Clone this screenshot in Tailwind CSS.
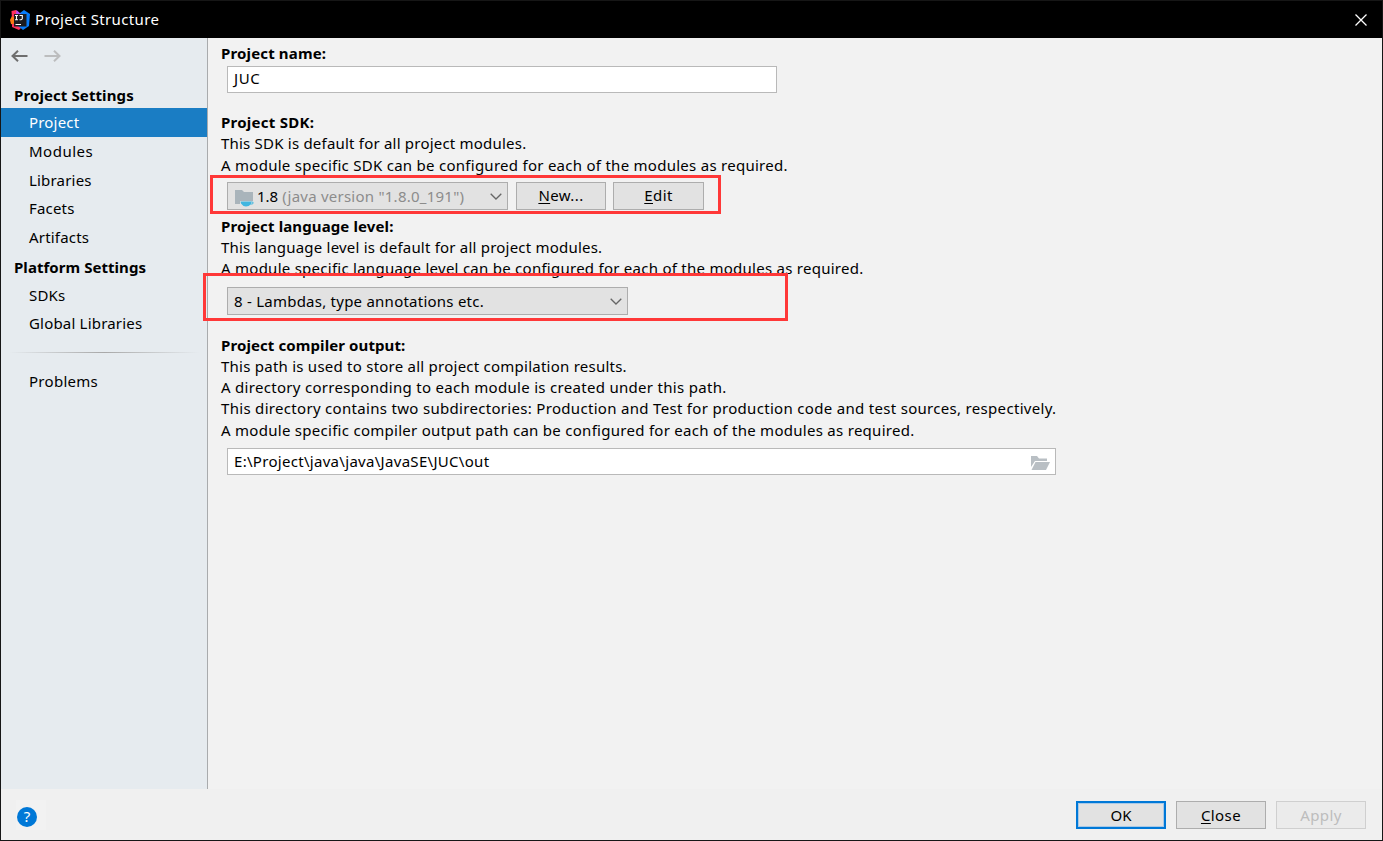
<!DOCTYPE html>
<html lang="en">
<head>
<meta charset="utf-8">
<title>Project Structure</title>
<script src="https://cdn.jsdelivr.net/npm/@tailwindcss/browser@4"></script>
</head>
<body class="relative w-[1383px] h-[841px] overflow-hidden bg-[#f2f2f2] font-['Noto_Sans','Open_Sans',sans-serif] text-[15px] leading-[21px] text-black whitespace-nowrap">
<div class="flex h-full flex-col border border-[#161616]">
  <header class="flex h-[37px] shrink-0 items-center bg-black pl-[9px] pr-[15px] text-white">
    <svg class="size-5 shrink-0" viewBox="0 0 20 20">
      <path d="M1.500 1L6 0l4 4-5 6-3-1z" fill="#fe315d"/>
      <path d="M0 10l2-4 4 3-1 6-4-1z" fill="#f97a12"/>
      <path d="M2 14l6-1 4 4-3 3-7-3z" fill="#fe315d"/>
      <path d="M10 3l4-3 6 4-1 12-6 4-5-4z" fill="#087cfa"/>
      <path d="M6.500 0L11 4H6z" fill="#b74af7"/>
      <rect x="4" y="4" width="12.500" height="12.500" fill="#1b1b1f"/>
      <path d="M5 5.500h3M6.500 5.500v4.500M5 9.700h3M9.500 5.500h2.800v3q0 1.300-2.800 1.200M5.500 14.500h5.500" stroke="#fff" stroke-width="1.100" fill="none"/>
    </svg>
    <h1 class="ml-[5px] grow tracking-[0.35px]">Project Structure</h1>
    <svg class="size-[12px]" viewBox="0 0 12 12"><path d="M.5.5l11 11M11.500.5l-11 11" stroke="#fff" stroke-width="1.300"/></svg>
  </header>

  <div class="flex h-[751px] shrink-0">
    <nav class="flex w-[207px] shrink-0 flex-col border-r border-[#a9abad] bg-[#e6ebef] tracking-[0.19px]">
      <div class="flex h-[47px] gap-4 pl-[10px] pt-[12px]">
        <svg class="h-[13px] w-[17px]" viewBox="0 0 17 13"><path d="M16.500 6H1.500M7 .7L1.500 6L7 11.300" fill="none" stroke="#6e6e6e" stroke-width="2"/></svg>
        <svg class="h-[13px] w-[17px]" viewBox="0 0 17 13"><path d="M.5 6h15M10 .7l5.500 5.300L10 11.300" fill="none" stroke="#bcbdbe" stroke-width="2"/></svg>
      </div>
      <h2 class="h-[23px] pl-[13px] font-bold tracking-[0.1px]">Project Settings</h2>
      <ul class="leading-[29px]">
        <li class="h-[29px] bg-[#1a7dc4] pl-7 text-white">Project</li>
        <li class="h-[29px] pl-7 tracking-[0.5px]">Modules</li>
        <li class="h-[29px] pl-7">Libraries</li>
        <li class="h-[28px] pl-7 leading-[27px]">Facets</li>
        <li class="h-[29px] pl-7">Artifacts</li>
      </ul>
      <h2 class="h-[29px] pl-[13px] font-bold leading-[30px] tracking-[0.05px]">Platform Settings</h2>
      <ul class="leading-[28px]">
        <li class="h-[28px] pl-7">SDKs</li>
        <li class="h-[28px] pl-7">Global Libraries</li>
      </ul>
      <div class="mx-2 mt-[15px] h-px bg-linear-to-r from-transparent via-[#a8a8a8] to-transparent"></div>
      <p class="mt-[18px] pl-7 tracking-[0.28px]">Problems</p>
    </nav>

    <main class="flex grow flex-col pl-[13px]">
      <section class="mt-[5px] h-[69px]">
        <h2 class="font-bold tracking-[0.15px]">Project name:</h2>
        <div class="ml-[6px] mt-[2px] h-[27px] w-[550px] border border-[#b9b9b9] bg-white pl-[6px] leading-[23px] tracking-[0.6px]">JUC</div>
      </section>
      <section class="h-[104px]">
        <h2 class="font-bold tracking-[0.25px]">Project SDK:</h2>
        <p class="tracking-[0.21px]">This SDK is default for all project modules.</p>
        <p class="mt-px tracking-[0.27px]">A module specific SDK can be configured for each of the modules as required.</p>
        <div class="ml-[6px] mt-[6px] flex h-[28px] leading-[24px]">
          <div class="flex w-[281px] items-center border border-[#adadad] bg-[#e2e2e2] pl-[7px] pr-[5px]">
            <svg class="mr-[3px] mt-1 h-[18px] w-[19px]" viewBox="0 0 19 18">
              <path d="M0 1h7l2 2h9v9H5v3H0z" fill="#a9b4bb"/>
              <path d="M5.500 12.500h11.500q2 0 1.500 1.700t-3 1.300q-1.500 2-4.500 2t-5-3z" fill="#40b6e0"/><path d="M16 14h1.500" stroke="#e1e1e1"/>
            </svg>
            <span>1.8</span><span class="ml-1 grow tracking-[0.24px] text-[#8c8c8c]">(java version "1.8.0_191")</span>
            <svg class="h-[7px] w-3" viewBox="0 0 12 7"><path d="M.7.7L6 6L11.300.7" fill="none" stroke="#666" stroke-width="1.300"/></svg>
          </div>
          <button class="ml-2 w-[90px] border border-[#adadad] bg-[#e2e2e2] pb-0.5 tracking-[0.4px]"><u class="underline-offset-2">N</u>ew...</button>
          <button class="ml-[7px] w-[91px] border border-[#adadad] bg-[#e2e2e2] pb-0.5 tracking-[0.4px]"><u class="underline-offset-2">E</u>dit</button>
        </div>
      </section>
      <section class="h-[119px]">
        <h2 class="font-bold tracking-[0.12px]">Project language level:</h2>
        <p class="tracking-[0.21px]">This language level is default for all project modules.</p>
        <p class="tracking-[0.26px]">A module specific language level can be configured for each of the modules as required.</p>
        <div class="ml-[6px] mt-[8px] flex h-[28px] w-[401px] items-center border border-[#adadad] bg-[#e2e2e2] pl-[6px] pr-[5px]">
          <span class="grow tracking-[0.24px]">8 - Lambdas, type annotations etc.</span>
          <svg class="h-[7px] w-3" viewBox="0 0 12 7"><path d="M.7.7L6 6L11.300.7" fill="none" stroke="#666" stroke-width="1.300"/></svg>
        </div>
      </section>
      <section>
        <h2 class="font-bold tracking-[0.1px]">Project compiler output:</h2>
        <p class="tracking-[0.24px]">This path is used to store all project compilation results.</p>
        <p class="tracking-[0.3px]">A directory corresponding to each module is created under this path.</p>
        <p class="tracking-[0.31px]">This directory contains two subdirectories: Production and Test for production code and test sources, respectively.</p>
        <p class="mt-px tracking-[0.28px]">A module specific compiler output path can be configured for each of the modules as required.</p>
        <div class="ml-[6px] mt-[7px] flex h-[27px] w-[829px] items-center border border-[#b9b9b9] bg-white pl-[6px] pr-[5px]">
          <span class="grow tracking-[0.3px]">E:\Project\java\java\JavaSE\JUC\out</span>
          <svg class="mt-[2px] h-[14px] w-[19px]" viewBox="0 0 19 14"><path d="M0 11V0h6l2 2.500h8v2.500H4z" fill="#b9bfc4"/><path d="M4.500 6H19l-4 8H.5z" fill="#b9bfc4"/></svg>
        </div>
      </section>
    </main>
  </div>

  <footer class="flex grow items-start bg-[#f0f0f0] pl-[15px] pr-4">
    <div class="mt-[11px] flex h-[30px] w-[30px] items-center bg-[#f2f2f2] pt-[3px]">
      <div class="ml-px flex size-5 items-center justify-center rounded-full bg-[#0078d7] text-[15px] text-white">?</div>
    </div>
    <div class="ml-auto mt-[12px] flex gap-[10px] leading-[24px]">
      <button class="h-7 w-[90px] border-2 border-[#0078d7] bg-[#e2e2e2] inset-ring inset-ring-[#a9c9e6]">OK</button>
      <button class="h-7 w-[90px] border border-[#adadad] bg-[#e2e2e2] tracking-[0.4px]"><u class="underline-offset-2">C</u>lose</button>
      <button class="h-7 w-[90px] border border-[#cfcfcf] bg-[#ebebeb] tracking-[0.4px] text-[#bdbdbd]">Apply</button>
    </div>
  </footer>
</div>
<div class="absolute left-[210px] top-[175px] h-[39px] w-[511px] border-3 border-[#ff3838]"></div>
<div class="absolute left-[203px] top-[273px] h-[48px] w-[585px] border-3 border-[#ff3838]"></div>
</body>
</html>
